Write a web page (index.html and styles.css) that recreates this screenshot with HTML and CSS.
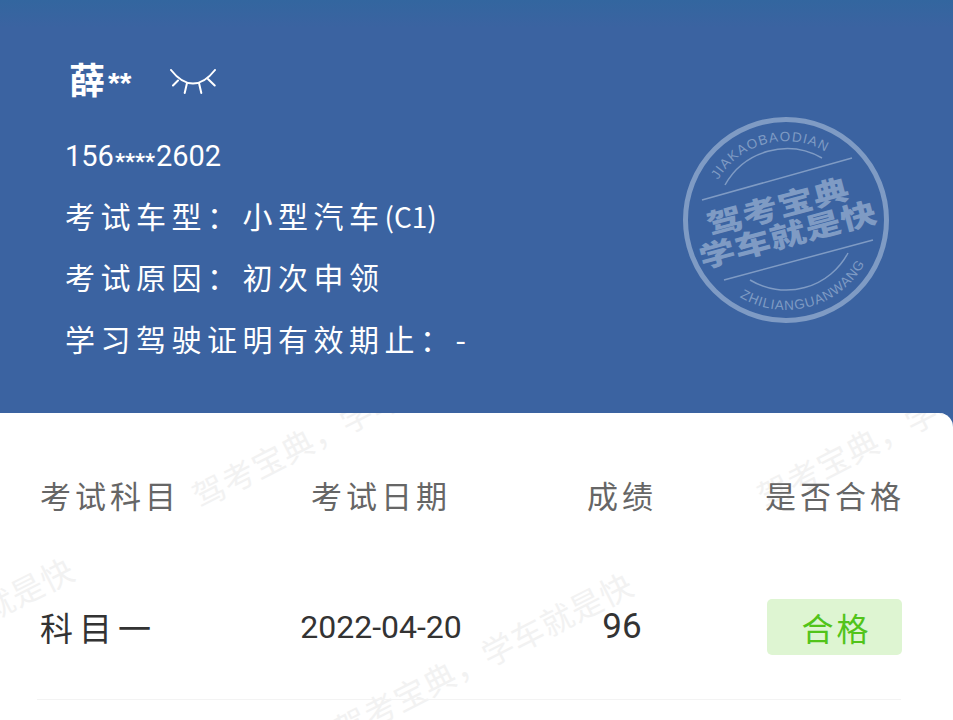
FILE: index.html
```html
<!DOCTYPE html>
<html lang="zh-CN">
<head>
<meta charset="utf-8">
<title>考试成绩</title>
<link rel="stylesheet" href="styles.css">
</head>
<body>
<div class="page">
  <header class="hero">
    <div class="name-row">
      <span class="surname">薛</span><span class="name-mask">**</span>
      <svg class="eye" viewBox="0 0 46 26" width="46" height="26" fill="none" stroke="#fff" stroke-width="2" stroke-linecap="round">
        <path d="M1 1C8 10 15 14.500 23 14.500S38 10 45 1"/>
        <path d="M8 11.500 3 16.500M17 14 14.700 24M29 14 31.300 24M38 10 44.700 16.500"/>
      </svg>
    </div>
    <div class="info phone">156<span class="phone-mask">****</span>2602</div>
    <div class="info">考试车型：小型汽车<span class="latin">(C1)</span></div>
    <div class="info">考试原因：初次申领</div>
    <div class="info">学习驾驶证明有效期止：-</div>
    <svg class="stamp" viewBox="0 0 210 210" width="210" height="210">
      <defs>
        <path id="arc-top" d="M37 65A79 79 0 0 1 144 36.400"/>
        <path id="arc-bottom" d="M58.600 182A90 90 0 0 0 183.400 149.200"/>
      </defs>
      <circle class="stamp-ring" cx="105" cy="105" r="100.500"/>
      <path class="stamp-line" d="M44 70A71 71 0 0 1 141 43M69 165A70 70 0 0 0 167 138"/>
      <path class="stamp-line" d="M21 85 171 43M43 165 192 125"/>
      <text class="stamp-small"><textPath href="#arc-top" textLength="123">JIAKAOBAODIAN</textPath></text>
      <text class="stamp-small"><textPath href="#arc-bottom" textLength="144">ZHILIANGUANWANG</textPath></text>
      <text class="stamp-big" transform="translate(97 92) rotate(-15) scale(1 .8)" y="13" text-anchor="middle">驾考宝典</text>
      <text class="stamp-big" transform="translate(107 120) rotate(-15) scale(1 .8)" y="13" text-anchor="middle">学车就是快</text>
    </svg>
  </header>
  <main class="card">
    <div class="marks">
      <span class="mark mark-a">驾考宝典，学车就是快</span>
      <span class="mark mark-b">驾考宝典，学车就是快</span>
      <span class="mark mark-c">驾考宝典，学车就是快</span>
      <span class="mark mark-d">驾考宝典，学车就是快</span>
    </div>
    <div class="grid head">
      <span>考试科目</span><span class="center">考试日期</span><span class="center">成绩</span><span class="right">是否合格</span>
    </div>
    <div class="grid row">
      <span class="subject">科目一</span><span class="center num">2022-04-20</span><span class="center num score">96</span><span class="badge">合格</span>
    </div>
  </main>
</div>
</body>
</html>
```
FILE: styles.css
```css
* { box-sizing: border-box; }
html, body { margin: 0; height: 100%; overflow: hidden; }
body {
  background: #3b63a1;
  font-family: "Noto Sans CJK SC", "Noto Sans", sans-serif;
}
.page { width: 953px; height: 720px; overflow: hidden; }
.hero {
  position: relative;
  height: 413px;
  padding: 52px 0 0 65px;
  color: #fff;
  background: linear-gradient(#33669f 0, #3b63a1 28px);
}
.name-row { display: flex; align-items: center; height: 52px; }
.surname { font-size: 36px; line-height: 52px; font-weight: 700; margin-left: 4px; }
.name-mask { font-size: 30px; line-height: 52px; padding-top: 10px; font-weight: 700; margin-left: 3px; font-family: "Liberation Sans", sans-serif; }
.eye { margin: 7px 0 0 39px; }
.info {
  height: 61.500px;
  line-height: 61.500px;
  font-size: 30px;
  font-weight: 400;
  letter-spacing: 5.500px;
}
.latin { letter-spacing: 0; font-size: 28px; }
.phone {
  height: 59.500px;
  line-height: 63px;
  margin-top: 21px;
  font-family: Roboto, sans-serif;
  font-weight: 400;
  font-size: 29px;
  letter-spacing: 0;
}
.phone-mask { font-size: 22px; font-weight: 700; margin: 0 1px; vertical-align: -3px; }
.stamp { position: absolute; left: 681px; top: 115px; }
.stamp-ring { fill: none; stroke: #7f9bc4; stroke-width: 5; }
.stamp-line { fill: none; stroke: #7f9bc4; stroke-width: 1.500; }
.stamp-small { fill: #7f9bc4; font-family: "Liberation Sans", sans-serif; font-size: 13.500px; }
.stamp-big { fill: #7f9bc4; font-family: "Noto Sans CJK SC", sans-serif; font-size: 36px; font-weight: 900; letter-spacing: .5px; }
.card {
  position: relative;
  height: 307px;
  background: #fff;
  border-top-right-radius: 14px;
  overflow: hidden;
}
.marks { position: absolute; inset: 0; }
.mark {
  position: absolute;
  white-space: nowrap;
  font-size: 32px;
  line-height: 40px;
  font-weight: 400;
  letter-spacing: 1px;
  color: #f2f2f2;
  transform: rotate(-27deg);
  transform-origin: 0 50%;
}
.mark-a { left: 194px; top: 64px; }
.mark-b { left: 759px; top: 64px; }
.mark-c { left: -223px; top: 282px; }
.mark-d { left: 336px; top: 297px; }
.grid {
  position: relative;
  display: grid;
  grid-template-columns: 220px 242px 240px 159px;
  margin: 0 52px 0 40px;
  align-items: center;
}
.head {
  height: 100px;
  margin-top: 32px;
  font-size: 31px;
  font-weight: 400;
  letter-spacing: 4px;
  color: #666;
  line-height: 100px;
}
.head .right { margin-right: -4px; }
.row {
  height: 155px;
  margin-left: 37px;
  padding: 9px 0 0 3px;
  color: #333;
  border-bottom: 1px solid #f3f3f3;
}
.center { text-align: center; }
.right { text-align: right; }
.subject { font-size: 33px; font-weight: 400; letter-spacing: 6px; }
.num { font-family: Roboto, sans-serif; font-size: 32px; }
.score { font-size: 35px; }
.badge {
  justify-self: end;
  width: 135px;
  height: 56px;
  line-height: 56px;
  margin-right: -1px;
  padding-left: 4px;
  text-align: center;
  border-radius: 5px;
  background: #def5d2;
  color: #52c41a;
  font-size: 32px;
  font-weight: 400;
  letter-spacing: 3px;
}
```
